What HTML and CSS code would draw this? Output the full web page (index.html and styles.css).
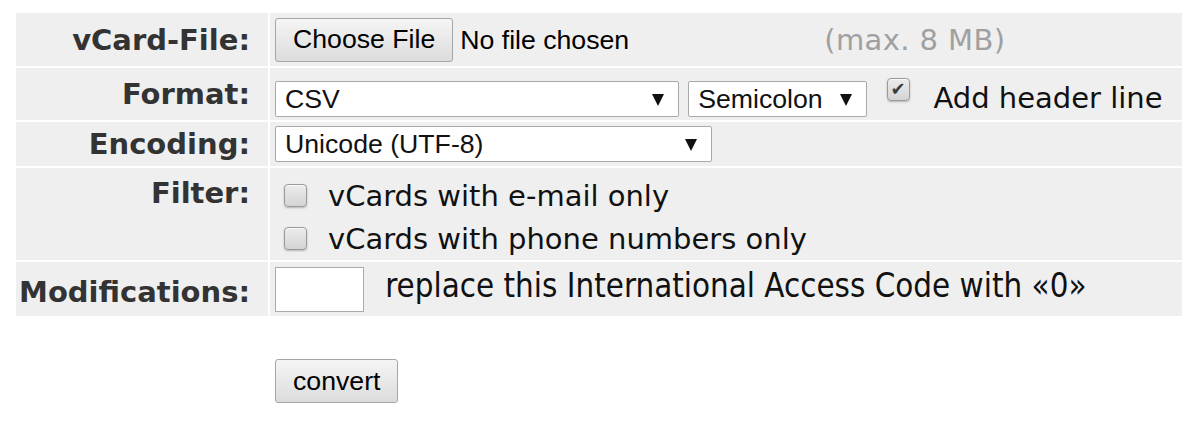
FILE: index.html
```html
<!DOCTYPE html>
<html>
<head>
	<title>vCard Converter</title>
	<link rel="stylesheet" href="styles.css">
</head>
<body>
	<form class="converter">
		<table class="form-table">
			<tr class="row-file">
				<th>vCard-File:</th>
				<td>
					<input type="file" id="vcard" name="vcard">
					<span class="note">(max. 8 MB)</span>
				</td>
			</tr>
			<tr class="row-format">
				<th>Format:</th>
				<td>
					<span class="select select-format"><select name="format"><option>CSV</option></select></span>
					<span class="select select-sep"><select name="separator"><option>Semicolon</option></select></span>
					<label class="check"><input type="checkbox" name="header" checked>Add header line</label>
				</td>
			</tr>
			<tr class="row-encoding">
				<th>Encoding:</th>
				<td>
					<span class="select select-enc"><select name="encoding"><option>Unicode (UTF-8)</option></select></span>
				</td>
			</tr>
			<tr class="row-filter">
				<th>Filter:</th>
				<td>
					<label class="option"><input type="checkbox" name="email">vCards with e-mail only</label>
					<label class="option"><input type="checkbox" name="phone">vCards with phone numbers only</label>
				</td>
			</tr>
			<tr class="row-mod">
				<th>Modifications:</th>
				<td>
					<input type="text" class="code" name="iac">
					<span class="hint">replace this International Access Code with «0»</span>
				</td>
			</tr>
			<tr class="row-submit">
				<th></th>
				<td><button type="button" class="btn">convert</button></td>
			</tr>
		</table>
	</form>
</body>
</html>
```

FILE: styles.css
```css
body {
	margin: 0;
	background: #fff;
	font-family: "DejaVu Sans", Verdana, sans-serif;
	color: #111;
}

.form-table {
	margin: 11px 0 0 14px;
	width: 1170px;
	table-layout: fixed;
	border-collapse: separate;
	border-spacing: 2px;
}

.form-table th,
.form-table td {
	background: #efefef;
	vertical-align: middle;
	padding: 0;
}

.form-table th {
	width: 252px;
	padding-right: 18px;
	box-sizing: border-box;
	text-align: right;
	font: bold 29px/34px "DejaVu Sans", Verdana, sans-serif;
	color: #333;
}

.form-table td {
	padding-left: 5px;
	font-size: 29px;
	line-height: 34px;
	white-space: nowrap;
}

.row-file th { height: 53px; }
.row-format th { height: 52px; }
.row-format td { padding-top: 6px; }
.row-encoding th { height: 44px; }
.row-mod th { height: 54px; padding-top: 6px; }

.row-filter th {
	height: 92px;
	vertical-align: top;
	padding-top: 8px;
}

.row-filter td {
	vertical-align: top;
	padding-top: 6px;
}

.row-submit th,
.row-submit td {
	background: none;
}

.row-submit td {
	padding-top: 41px;
}

/* controls */
input[type="file"] {
	width: 530px;
	font: 26.67px "Liberation Sans", Arial, sans-serif;
	color: #000;
	vertical-align: middle;
}

input[type="file"]::file-selector-button,
.btn {
	height: 44px;
	padding: 0 17px;
	margin: 0 7px 0 0;
	border: 1px solid #a6a6a6;
	border-radius: 3px;
	background: linear-gradient(#f5f5f5, #dcdcdc);
	font: 26.67px "Liberation Sans", Arial, sans-serif;
	color: #000;
	cursor: pointer;
}

.note {
	margin-left: 10px;
	color: #a0a0a0;
	vertical-align: middle;
	letter-spacing: 0.4px;
}

.select {
	position: relative;
	display: inline-block;
}

.select select {
	appearance: none;
	-webkit-appearance: none;
	height: 36px;
	padding: 0 30px 0 9px;
	border: 1px solid #a9a9a9;
	border-radius: 2px;
	background: #fff;
	font: 26.67px "Liberation Sans", Arial, sans-serif;
	color: #111;
	box-sizing: border-box;
}

.select::after {
	content: "";
	position: absolute;
	right: 15px;
	top: 50%;
	margin-top: -5px;
	border-left: 6px solid transparent;
	border-right: 6px solid transparent;
	border-top: 12px solid #111;
	pointer-events: none;
}

.select-format select { width: 404px; }
.select-sep select { width: 179px; }
.select-enc select { width: 437px; }

input[type="checkbox"] {
	appearance: none;
	-webkit-appearance: none;
	position: relative;
	width: 23px;
	height: 23px;
	margin: 0;
	border: 1px solid #9a9a9a;
	border-radius: 4px;
	background: linear-gradient(#ececec, #d4d4d4);
	box-shadow: inset 0 1px 0 rgba(255, 255, 255, 0.7), 0 1px 2px rgba(0, 0, 0, 0.25);
	box-sizing: border-box;
}

input[type="checkbox"]:checked::after {
	content: "\2714";
	position: absolute;
	left: 2px;
	top: 0;
	font: 18px/20px "DejaVu Sans", sans-serif;
	color: #3c3c3c;
}

.check input {
	margin: 0 23px 7px 11px;
}

.option {
	display: flex;
	align-items: center;
	height: 43px;
}

.option input {
	margin: 0 21px 0 9px;
}

.code {
	width: 89px;
	height: 45px;
	margin-right: 12px;
	border: 1px solid #ababab;
	background: #fff;
	box-sizing: border-box;
	vertical-align: middle;
}

.hint {
	display: inline-block;
	padding-bottom: 6px;
	font-family: "DejaVu Sans Condensed", "DejaVu Sans", sans-serif;
	font-stretch: condensed;
	font-size: 32.8px;
	vertical-align: middle;
}
```
